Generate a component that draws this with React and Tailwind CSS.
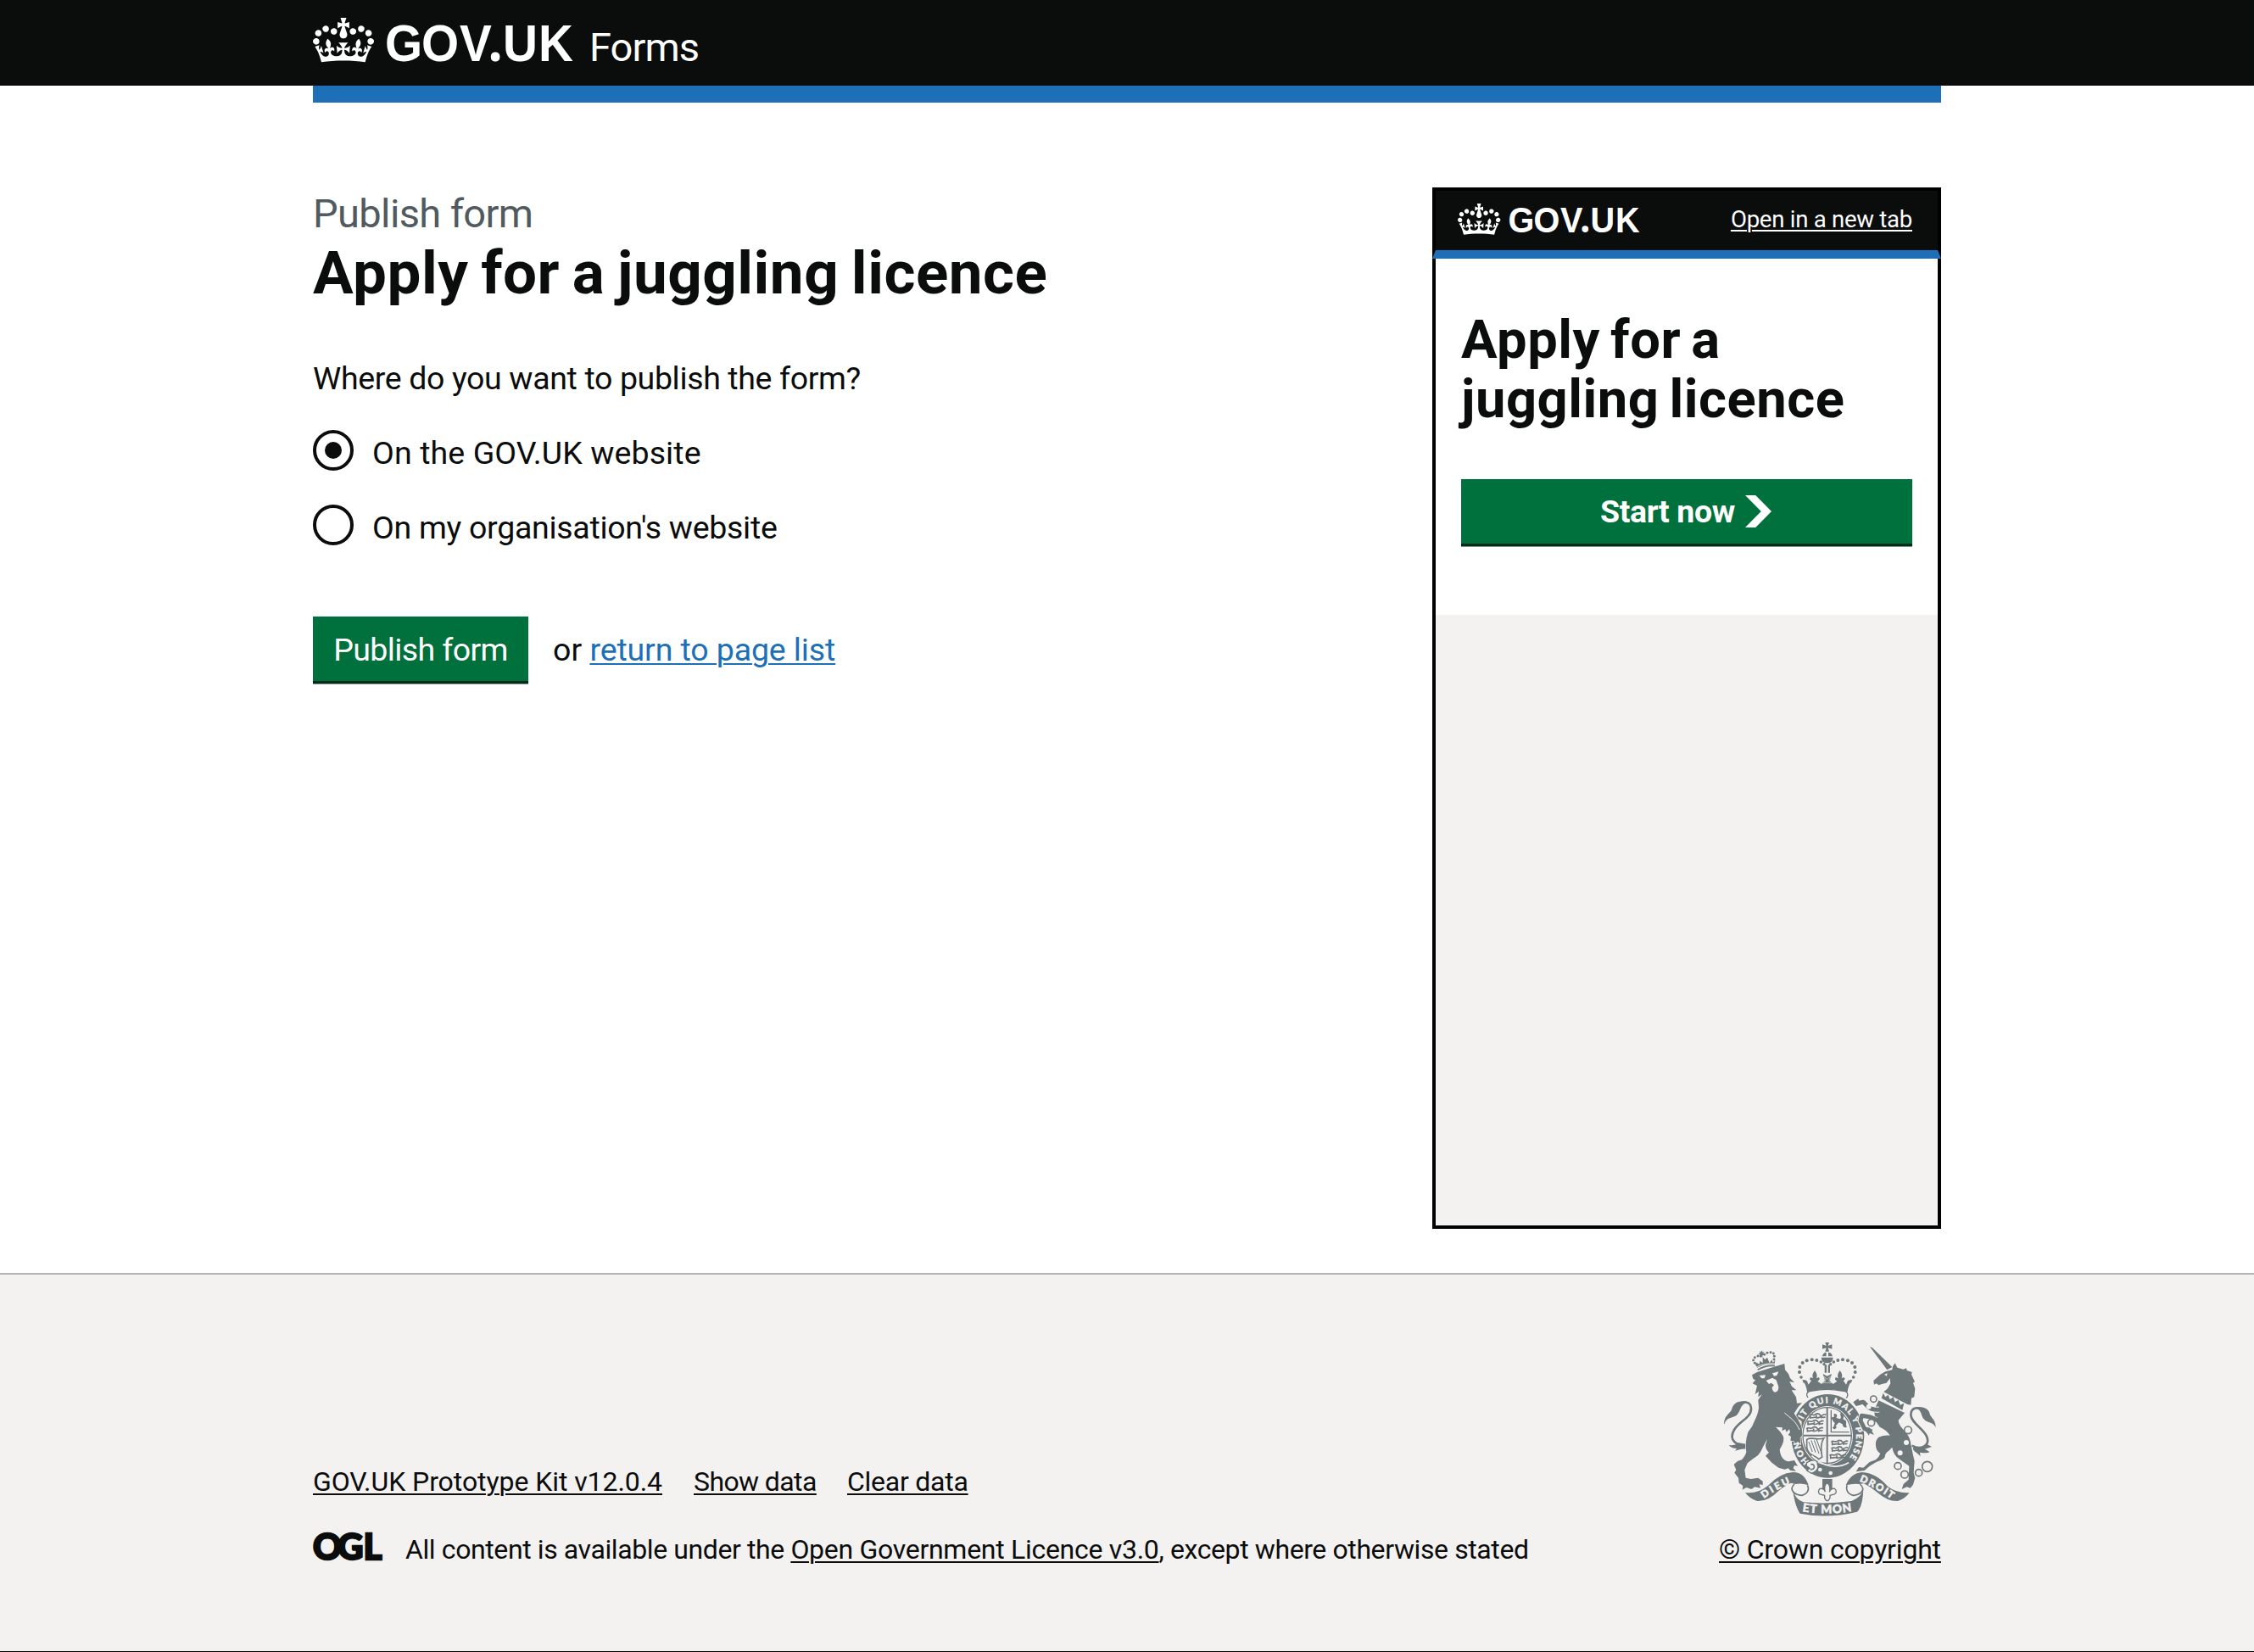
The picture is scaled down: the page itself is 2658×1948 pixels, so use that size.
import React from "react";

const CROWN =
  "M25 30.2c3.5 1.5 7.7-.2 9.1-3.7 1.5-3.6-.2-7.8-3.9-9.2-3.6-1.4-7.6.3-9.1 3.9-1.4 3.5.3 7.5 3.9 9zM9 39.5c3.6 1.5 7.8-.2 9.2-3.7 1.5-3.6-.2-7.8-3.9-9.1-3.6-1.5-7.6.2-9.1 3.8-1.4 3.5.3 7.5 3.8 9zM4.4 57.2c3.5 1.5 7.7-.2 9.1-3.8 1.5-3.6-.2-7.7-3.9-9.1-3.5-1.5-7.6.3-9.1 3.8-1.4 3.5.3 7.6 3.9 9.1zm38.3-21.4c3.5 1.5 7.7-.2 9.1-3.8 1.5-3.6-.2-7.7-3.9-9.1-3.6-1.5-7.6.3-9.1 3.8-1.3 3.6.4 7.7 3.9 9.1zm64.4-5.6c-3.6 1.5-7.8-.2-9.1-3.7-1.5-3.6.2-7.8 3.8-9.2 3.6-1.4 7.7.3 9.2 3.9 1.3 3.5-.4 7.5-3.9 9zm15.9 9.3c-3.6 1.5-7.7-.2-9.1-3.7-1.5-3.6.2-7.8 3.7-9.1 3.6-1.5 7.7.2 9.2 3.8 1.5 3.5-.3 7.5-3.8 9zm4.7 17.7c-3.6 1.5-7.8-.2-9.2-3.8-1.5-3.6.2-7.7 3.9-9.1 3.6-1.5 7.7.3 9.2 3.8 1.3 3.5-.4 7.6-3.9 9.1zM89.3 35.8c-3.6 1.5-7.8-.2-9.2-3.8-1.4-3.6.2-7.7 3.9-9.1 3.6-1.5 7.7.3 9.2 3.8 1.4 3.6-.3 7.7-3.9 9.1zM69.7 17.7l8.9 4.7V9.3l-8.9 2.8c-.2-.3-.5-.6-.9-.9L72.4 0H59.6l3.5 11.2c-.3.3-.6.5-.9.9l-8.8-2.8v13.1l8.8-4.7c.3.3.6.7.9.9l-5 15.4v.1c-.2.8-.4 1.6-.4 2.4 0 4.1 3.1 7.5 7 8.1h.2c.3 0 .7.1 1 .1.4 0 .7 0 1-.1h.2c4-.6 7.1-4.1 7.1-8.1 0-.8-.1-1.7-.4-2.4V34l-5.1-15.4c.4-.2.7-.6 1-.9zM66 92.8c16.9 0 32.8 1.1 47.1 3.2 4-16.9 8.9-26.7 14-33.5l-9.6-3.4c1 4.9 1.1 7.2 0 10.2-1.5-1.4-3-4.3-4.2-8.7L108.6 76c2.8-2 5-3.2 7.5-3.3-4.4 9.4-10 11.9-13.6 11.2-4.3-.8-6.3-4.6-5.6-7.9 1-4.7 5.7-5.9 8-.5 4.3-8.7-3-11.4-7.6-8.8 7.1-7.2 7.9-13.5 2.1-21.1-8 6.1-8.1 12.3-4.5 20.8-4.7-5.4-12.1-2.5-9.5 6.2 3.4-5.2 7.9-2 7.2 3.1-.6 4.3-6.4 7.8-13.5 7.2-10.3-.9-10.9-8-11.2-13.8 2.5-.5 7.1 1.8 11 7.3L80.2 60c-4.1 4.4-8 5.3-12.3 5.4 1.4-4.4 8-11.6 8-11.6H55.5s6.4 7.2 7.9 11.6c-4.2-.1-8-1-12.3-5.4l1.4 16.4c3.9-5.5 8.5-7.7 10.9-7.3-.3 5.8-.9 12.8-11.1 13.8-7.2.6-12.9-2.9-13.5-7.2-.7-5 3.8-8.3 7.1-3.1 2.7-8.7-4.6-11.6-9.4-6.2 3.7-8.5 3.6-14.7-4.6-20.8-5.8 7.6-5 13.9 2.2 21.1-4.7-2.6-11.9.1-7.7 8.8 2.3-5.5 7.1-4.2 8.1.5.7 3.3-1.3 7.1-5.7 7.9-3.5.7-9-1.8-13.5-11.2 2.5.1 4.7 1.3 7.5 3.3l-4.7-15.4c-1.2 4.4-2.7 7.2-4.3 8.7-1.1-3-.9-5.3 0-10.2l-9.5 3.4c5 6.9 9.9 16.7 14 33.5 14.8-2.1 30.8-3.2 47.7-3.2z";

function Logotype({ className, baseline = 50.7 }) {
  return (
    <svg viewBox="0 0 306 54" className={`overflow-visible ${className}`} fill="currentColor">
      <path d={CROWN} transform="scale(.5455)" fillRule="evenodd" />
      <text
        y={baseline}
        x="91.4 137.6 186 222 240.8 286"
        transform="scale(.93 1)"
        fontSize="61"
        fontWeight="700"
        fontFamily="'Liberation Sans', sans-serif"
      >
        GOV<tspan fontFamily="'Noto Sans', sans-serif" fontSize="66">.</tspan>UK
      </text>
    </svg>
  );
}

function OglLogo() {
  return (
    <svg viewBox="0 0 82 34" className="h-[34px] w-[82px] shrink-0 overflow-visible" fill="currentColor">
      <text
        y="32"
        x="0 29 59.5"
        fontSize="42"
        fontWeight="900"
        fontFamily="Lato, sans-serif"
        stroke="currentColor"
        strokeWidth="2.4"
      >
        OGL
      </text>
    </svg>
  );
}

const INK = "#6e7779";
const PAPER = "#f3f2f1";

const ARCH = [
  [353, 207, 5], [342, 192, 5.5], [336, 174, 6], [337, 156, 6], [347, 141, 6], [362, 133, 6],
  [380, 130, 6], [397, 132, 6], [412, 138, 5.5], [423, 146, 5],
];

function Beast({ x, y }) {
  return (
    <g transform={`translate(${x} ${y})`} stroke={INK} strokeWidth="5" fill="none" strokeLinecap="round">
      <path d="M0 4C8-2 12 8 20 2S34 0 38 5S50-2 56 2M4 12c6 4 10-2 16 0s10 3 16-1 10 4 18 0M2 5v10M24 6v8M42 6v8" />
    </g>
  );
}

function Crest() {
  return (
    <svg viewBox="69 69 750 612" className="ml-[6px] h-[204px] w-[250px] overflow-visible" fill={INK}>
      {/* central crown */}
      <path d="M427 69h14l-4 12 14-5v16l-14-4 4 13h-14l4-13-14 4v-16l14 5zM416 118Q420 104 431 104V118ZM438 104Q450 104 453 118H438ZM413 122H455Q454 141 434 142Q414 141 413 122ZM425 148h7v28h-7zM437 148h7v28h-7z" />
      {ARCH.map(([x, y, r]) => (
        <g key={x}>
          <circle cx={x} cy={y} r={r} />
          <circle cx={869 - x} cy={y} r={r} />
        </g>
      ))}
      <path d="M345 200L362 204L368 218L378 204Q368 200 376 192L384 196Q378 184 390 168Q402 184 396 196L404 192Q412 200 400 206L414 216L426 204L419 180L434 188L450 180L443 204L455 216L469 206Q457 200 465 192L473 196Q467 184 479 168Q491 184 485 196L493 192Q501 200 491 204L501 218L507 204L524 200Q508 218 506 244Q434 226 363 244Q361 218 345 200Z" />
      <path d="M424 190L434 199L445 190L440 206L450 212H419L429 206Z" stroke={PAPER} strokeWidth="1.5" />
      <path d="M366 264C356 250 366 240 382 240Q434 230 486 240C504 240 512 250 502 266" fill={PAPER} stroke={INK} strokeWidth="4" />
      {/* garter */}
      <ellipse cx="436" cy="400" rx="129" ry="148" />
      <ellipse cx="434" cy="398" rx="91" ry="104" fill={PAPER} />
      <ellipse cx="434" cy="398" rx="86" ry="99" fill="none" stroke={INK} strokeWidth="4" />
      <path id="garter-motto" d="M371 490A101 117 0 1 1 501 490" fill="none" />
      <text fill={PAPER} stroke={PAPER} strokeWidth="1.2" fontSize="30" fontWeight="900" fontFamily="Lato, sans-serif">
        <textPath href="#garter-motto" textLength="522" lengthAdjust="spacing">
          HONI SOIT QUI MAL Y PENSE
        </textPath>
      </text>
      {/* quartered shield */}
      <path d="M434 298V500M347 398H521" stroke={INK} strokeWidth="6" fill="none" />
      <Beast x="372" y="322" />
      <Beast x="364" y="345" />
      <Beast x="362" y="369" />
      <path d="M448 308V386H512" fill="none" stroke={INK} strokeWidth="4" />
      <path d="M458 322c10-4 14 8 8 14l14 4c8-10-6-18 4-22 8 2 12 12 6 22l10 6c4 10-2 14 4 22-8 6-16-2-16-10l-12-6-12 12c6 4 2 12-6 12l-6-6c8-2 6-12 10-16-8-4-10-16-14-16-2-6 8-4 10-6z" />
      <Beast x="450" y="416" />
      <Beast x="450" y="439" />
      <Beast x="444" y="464" />
      <path d="M362 412C378 402 396 416 422 408C410 424 412 452 416 474L404 482C392 468 366 470 362 440Z" fill="none" stroke={INK} strokeWidth="5" />
      <path d="M376 414v38M386 412v46M396 416v50M405 414v52" stroke={INK} strokeWidth="3" transform="rotate(-20 390 438)" />
      {/* buckle and strap */}
      <path d="M380 470C420 512 470 516 510 494" fill="none" stroke={PAPER} strokeWidth="5" />
      <path d="M362 494Q384 480 398 490L402 510Q398 526 378 532L362 522L372 514L360 506Z" fill={PAPER} stroke={INK} strokeWidth="4" />
      <path d="M376 500Q390 498 388 512Q384 520 374 518" fill="none" stroke={INK} strokeWidth="5" />
      <circle cx="409" cy="519" r="7" fill={PAPER} />
      <circle cx="446" cy="531" r="7" fill={PAPER} />
      {/* lion tail */}
      <path d="M152 432C112 436 84 414 105 378C124 346 166 336 165 302C164 276 134 274 118 292" fill="none" stroke={INK} strokeWidth="8" />
      <path d="M69 359C70 322 94 322 98 300C106 280 128 272 148 282C126 290 128 312 114 326C98 338 80 330 69 359Z" />
      <path d="M86 431C100 436 112 430 122 424L150 430L146 446C132 444 122 450 108 452L114 444C102 444 92 440 86 431Z" />
      {/* lion */}
      <path
        d="M168 184L186 174L236 158L283 144L285 166L297 180L303 196L318 210L301 208L309 224L325 238L308 238L324 262L327 284L345 283L331 298L317 320L330 340L343 366L347 396L338 408L340 428L330 420L322 426L316 418L304 416L306 402L296 396L303 386L300 376L290 386L286 376L274 382L276 370L252 368Q270 384 278 400Q286 416 266 448Q268 468 276 478Q286 490 298 490L318 486L330 506L318 504L314 514L324 524L304 522L296 514L284 518L262 512L238 494L216 470L228 458Q216 448 216 432L222 410L206 440Q196 464 184 472Q166 484 152 496L142 520L146 548L164 552L190 548L206 560L206 574L194 570L198 584L178 580L166 588L148 582L134 590L136 576L122 566L120 548L106 530L112 520L104 500L118 488L132 484Q146 468 148 456Q142 424 154 386Q170 368 178 344Q190 320 192 300L190 272L204 252L190 262L192 242L179 252L186 222L170 214L180 202L172 198Z"
        stroke={PAPER}
        strokeWidth="4"
        paintOrder="stroke"
      />
      <path d="M283 318C306 338 322 346 336 378" fill="none" stroke={PAPER} strokeWidth="3" />
      <path d="M194 186L216 184L212 196L202 196ZM240 178L262 172L256 186L246 188ZM218 204L240 194L254 202L262 226Q262 244 250 245Q240 244 239 228L246 220L236 212L228 216Z" fill={PAPER} />
      {/* lion crown */}
      <path d="M186 158Q216 142 248 146L250 132L242 140L238 130L230 142L222 122L214 130L206 120L206 142L196 134L194 146L184 140L180 148Z" />
      <path d="M183 156Q216 140 250 144" stroke={PAPER} strokeWidth="2.5" fill="none" />
      <path d="M188 166Q218 148 249 152" stroke={INK} strokeWidth="5" fill="none" />
      {[[178, 142], [173, 132], [178, 122], [189, 117], [199, 118], [212, 112], [222, 106], [234, 104], [244, 108], [247, 118], [246, 129]].map(([x, y]) => (
        <circle key={`${x}-${y}`} cx={x} cy={y} r="4.4" />
      ))}
      <path d="M195 98l4 6 5-7 2 7 6-2-4 6 5 5-7 0-1 7-5-5-6 4 2-7-6-3 6-2z" />
      {/* unicorn tail */}
      <path d="M734 434C766 452 796 434 788 406C780 376 732 356 730 326C730 300 752 296 768 306" fill="none" stroke={INK} strokeWidth="8" />
      <path d="M742 300C770 290 796 304 797 322C800 336 818 340 818 370C808 348 788 356 776 340C764 326 772 308 742 300Z" />
      <path d="M738 440C736 456 752 456 764 472L762 458C774 460 788 462 796 456L780 446L804 438L786 428L760 444Z" />
      {/* unicorn */}
      <path d="M585 84L594 88L664 156L646 166Z" />
      <path d="M598 204L622 182L640 172L664 166L666 154L674 142L682 158L704 164L714 160L716 168L734 174L732 182L744 208L738 212L745 232L742 262L732 266L730 290L718 288L634 244L648 232L658 214L656 196L644 212L628 216L616 220L608 214L600 218Z" />
      <path d="M636 182L648 178L644 188Z" fill={PAPER} />
      <path d="M626 246L718 292L708 314L622 268Z" fill={PAPER} />
      <path d="M626 266L632 248L640 262L650 254L656 270L668 262L674 280L686 272L692 290L706 284L700 308Z" />
      <path d="M616 274L708 318L686 344Q686 354 694 366L716 392Q728 408 730 428L738 468L743 488L740 530L745 548L738 572L728 584L716 580L698 588L704 570L722 554L724 506L690 482Q668 468 664 440L652 452Q638 460 638 474L634 480Q622 488 608 492L584 506L566 522L536 526L546 510L562 512L584 492L606 484Q618 474 622 462Q606 450 606 434Q604 414 616 404Q636 396 656 398Q644 378 620 368Q608 354 604 340L600 310Z" />
      <path d="M618 306Q590 310 576 294L562 280L536 284M608 344L584 332L556 328L552 346L566 374L592 384" fill="none" stroke={PAPER} strokeWidth="21" strokeLinejoin="round" />
      <path d="M622 306Q590 310 576 294L562 280L536 284M612 344L584 332L556 328L552 346L566 374L592 384" fill="none" stroke={INK} strokeWidth="15" strokeLinejoin="round" />
      <path d="M526 280L544 268L552 290L536 294ZM562 372L584 370L600 396L584 390L582 398Z" />
      {[[598, 269, 11], [590, 353, 12], [720, 379, 13], [684, 506, 12], [708, 536, 13], [758, 530, 12], [788, 508, 18]].map(([x, y, r]) => (
        <circle key={x} cx={x} cy={y} r={r} fill={PAPER} stroke={INK} strokeWidth="5" />
      ))}
      {[[714, 423], [692, 460], [581, 296]].map(([x, y]) => (
        <circle key={x} cx={x} cy={y} r="9" fill={PAPER} />
      ))}
      {/* fleur-de-lis */}
      <path d="M417 552H452V592H417Z" />
      <path d="M434 564Q448 578 442 598Q446 584 460 586Q472 596 460 606L444 610V620Q434 638 425 620V610L408 606Q398 596 409 586Q424 584 427 598Q420 578 434 564Z" fill={PAPER} stroke={INK} strokeWidth="4" />
      {/* ribbons */}
      <path d="M144 600Q186 606 224 576Q268 530 312 528Q352 526 368 574Q344 566 322 570L306 566Q286 574 262 594Q226 632 186 630Q160 622 144 600Z" />
      <path d="M725 600Q684 604 648 578Q606 530 558 528Q518 530 500 574Q524 568 546 570L564 568Q588 580 612 600Q648 632 684 630Q710 622 725 600Z" />
      <path d="M318 570C296 592 320 608 344 610C366 604 372 588 364 574M550 570C574 592 550 608 526 610C504 604 500 588 504 574" fill="none" stroke={INK} strokeWidth="5" />
      <path d="M312 588Q320 624 350 634Q434 642 520 630Q556 616 562 588Q560 650 540 668Q434 694 338 674Q320 650 312 588Z" />
      <path id="ribbon-left" d="M210 621Q254 588 310 565" fill="none" />
      <path id="ribbon-right" d="M548 560Q602 580 664 625" fill="none" />
      <path id="ribbon-centre" d="M346 667Q434 681 526 665" fill="none" />
      <g fill={PAPER} stroke={PAPER} strokeWidth="1.6" fontFamily="Lato, sans-serif" fontWeight="900">
        <text fontSize="35"><textPath href="#ribbon-left" textLength="108">DIEU</textPath></text>
        <text fontSize="35"><textPath href="#ribbon-right" textLength="130">DROIT</textPath></text>
        <text fontSize="41"><textPath href="#ribbon-centre" textLength="176">ET MON</textPath></text>
      </g>
    </svg>
  );
}

function Radio({ checked, tracking, children }) {
  return (
    <label className="flex h-12 gap-[22px]">
      <span className="flex size-12 shrink-0 items-center justify-center rounded-full border-4 border-[#0b0c0c]">
        {checked && <span className="size-5 rounded-full bg-[#0b0c0c]" />}
      </span>
      <span className={`pt-[3px] text-[37.5px] leading-[48px] ${tracking}`}>{children}</span>
    </label>
  );
}

function Link({ className = "", children }) {
  return (
    <a href="#" className={`underline decoration-2 underline-offset-[3px] ${className}`}>
      {children}
    </a>
  );
}

export default function App() {
  return (
    <div className="flex h-[1948px] w-full flex-col overflow-hidden border-b border-black bg-white font-[Roboto,sans-serif] whitespace-nowrap text-[#0b0c0c]">
      <header className="h-[101px] shrink-0 bg-[#0b0c0c] text-white">
        <div className="mx-auto flex h-full w-[1920px]">
          <Logotype className="mt-[21px] h-[54px] w-[306px]" />
          <span className="ml-[20px] text-[47px] leading-[112px] tracking-[-0.9px]">Forms</span>
        </div>
      </header>
      <div className="mx-auto h-5 w-[1920px] shrink-0 bg-[#1d70b8]" />

      <main className="mx-auto flex h-[1380px] w-[1920px] shrink-0 justify-between">
        <div className="pt-[102px]">
          <p className="text-[47px] leading-[58px] tracking-[-0.62px] text-[#505a5f]">Publish form</p>
          <h1 className="text-[71px] leading-[81px] font-bold tracking-[0.5px] [word-spacing:-3.5px]">
            Apply for a juggling licence
          </h1>
          <p className="mt-[59px] text-[37.5px] leading-[50px] tracking-[-0.36px]">
            Where do you want to publish the form?
          </p>
          <div className="mt-9 flex flex-col gap-10">
            <Radio checked tracking="tracking-[0.11px]">On the GOV.UK website</Radio>
            <Radio tracking="tracking-[-0.29px]">On my organisation's website</Radio>
          </div>
          <div className="mt-[84px] flex h-[76px] text-[37.5px] leading-[78px]">
            <button className="w-[254px] bg-[#00703c] tracking-[-0.62px] text-white shadow-[0_3.5px_0_#002d18]">
              Publish form
            </button>
            <p className="ml-[29px]">
              or <Link className="tracking-[-0.12px] text-[#1d70b8] underline-offset-4">return to page list</Link>
            </p>
          </div>
        </div>

        <aside className="mt-[100px] flex h-[1228px] w-[600px] flex-col">
          <div className="flex h-[84px] shrink-0 justify-between border-4 border-b-[10px] border-black border-b-[#1d70b8] bg-[#0b0c0c] pr-[30px] pl-[26px] text-white">
            <Logotype className="mt-[15px] h-[37.8px] w-[214px]" baseline={49} />
            <Link className="text-[27.6px] leading-[68px] tracking-[-0.28px]">Open in a new tab</Link>
          </div>
          <div className="flex-1 border-4 border-t-0 border-black bg-[#f3f2f1]">
            <div className="h-[420px] bg-white px-[30px] pt-[60px]">
              <h2 className="text-[63.3px] leading-[70px] font-bold tracking-[0.5px] [word-spacing:-4px]">
                Apply for a<br />juggling licence
              </h2>
              <button className="mt-[60px] flex h-[76px] w-full items-center justify-center gap-3 bg-[#00703c] pr-[2px] text-[37.5px] leading-[75px] font-bold tracking-[-0.35px] text-white shadow-[0_3.5px_0_#002d18]">
                Start now
                <svg viewBox="0 0 33 40" className="h-[38px] w-[31px]" fill="currentColor" preserveAspectRatio="none">
                  <path d="M0 0h13l20 20-20 20H0l20-20z" />
                </svg>
              </button>
            </div>
          </div>
        </aside>
      </main>

      <footer className="flex-1 border-t-2 border-[#b1b4b6] bg-[#f3f2f1] text-[32px] leading-10">
        <div className="mx-auto flex w-[1920px] justify-between pt-20">
          <div className="pt-36">
            <div className="flex">
              <span className="w-[449px] tracking-[-0.07px]"><Link>GOV.UK Prototype Kit v12.0.4</Link></span>
              <span className="w-[181px] tracking-[-0.6px]"><Link>Show data</Link></span>
              <Link className="tracking-[-0.25px]">Clear data</Link>
            </div>
            <div className="mt-10 flex gap-[27px]">
              <OglLogo />
              <p className="tracking-[-0.4px]">
                All content is available under the{" "}
                <Link className="tracking-[-0.29px]">Open Government Licence v3.0</Link>, except where otherwise stated
              </p>
            </div>
          </div>
          <div className="flex w-[262px] flex-col">
            <Crest />
            <Link className="mt-5 tracking-[-0.18px]">© Crown copyright</Link>
          </div>
        </div>
      </footer>
    </div>
  );
}
